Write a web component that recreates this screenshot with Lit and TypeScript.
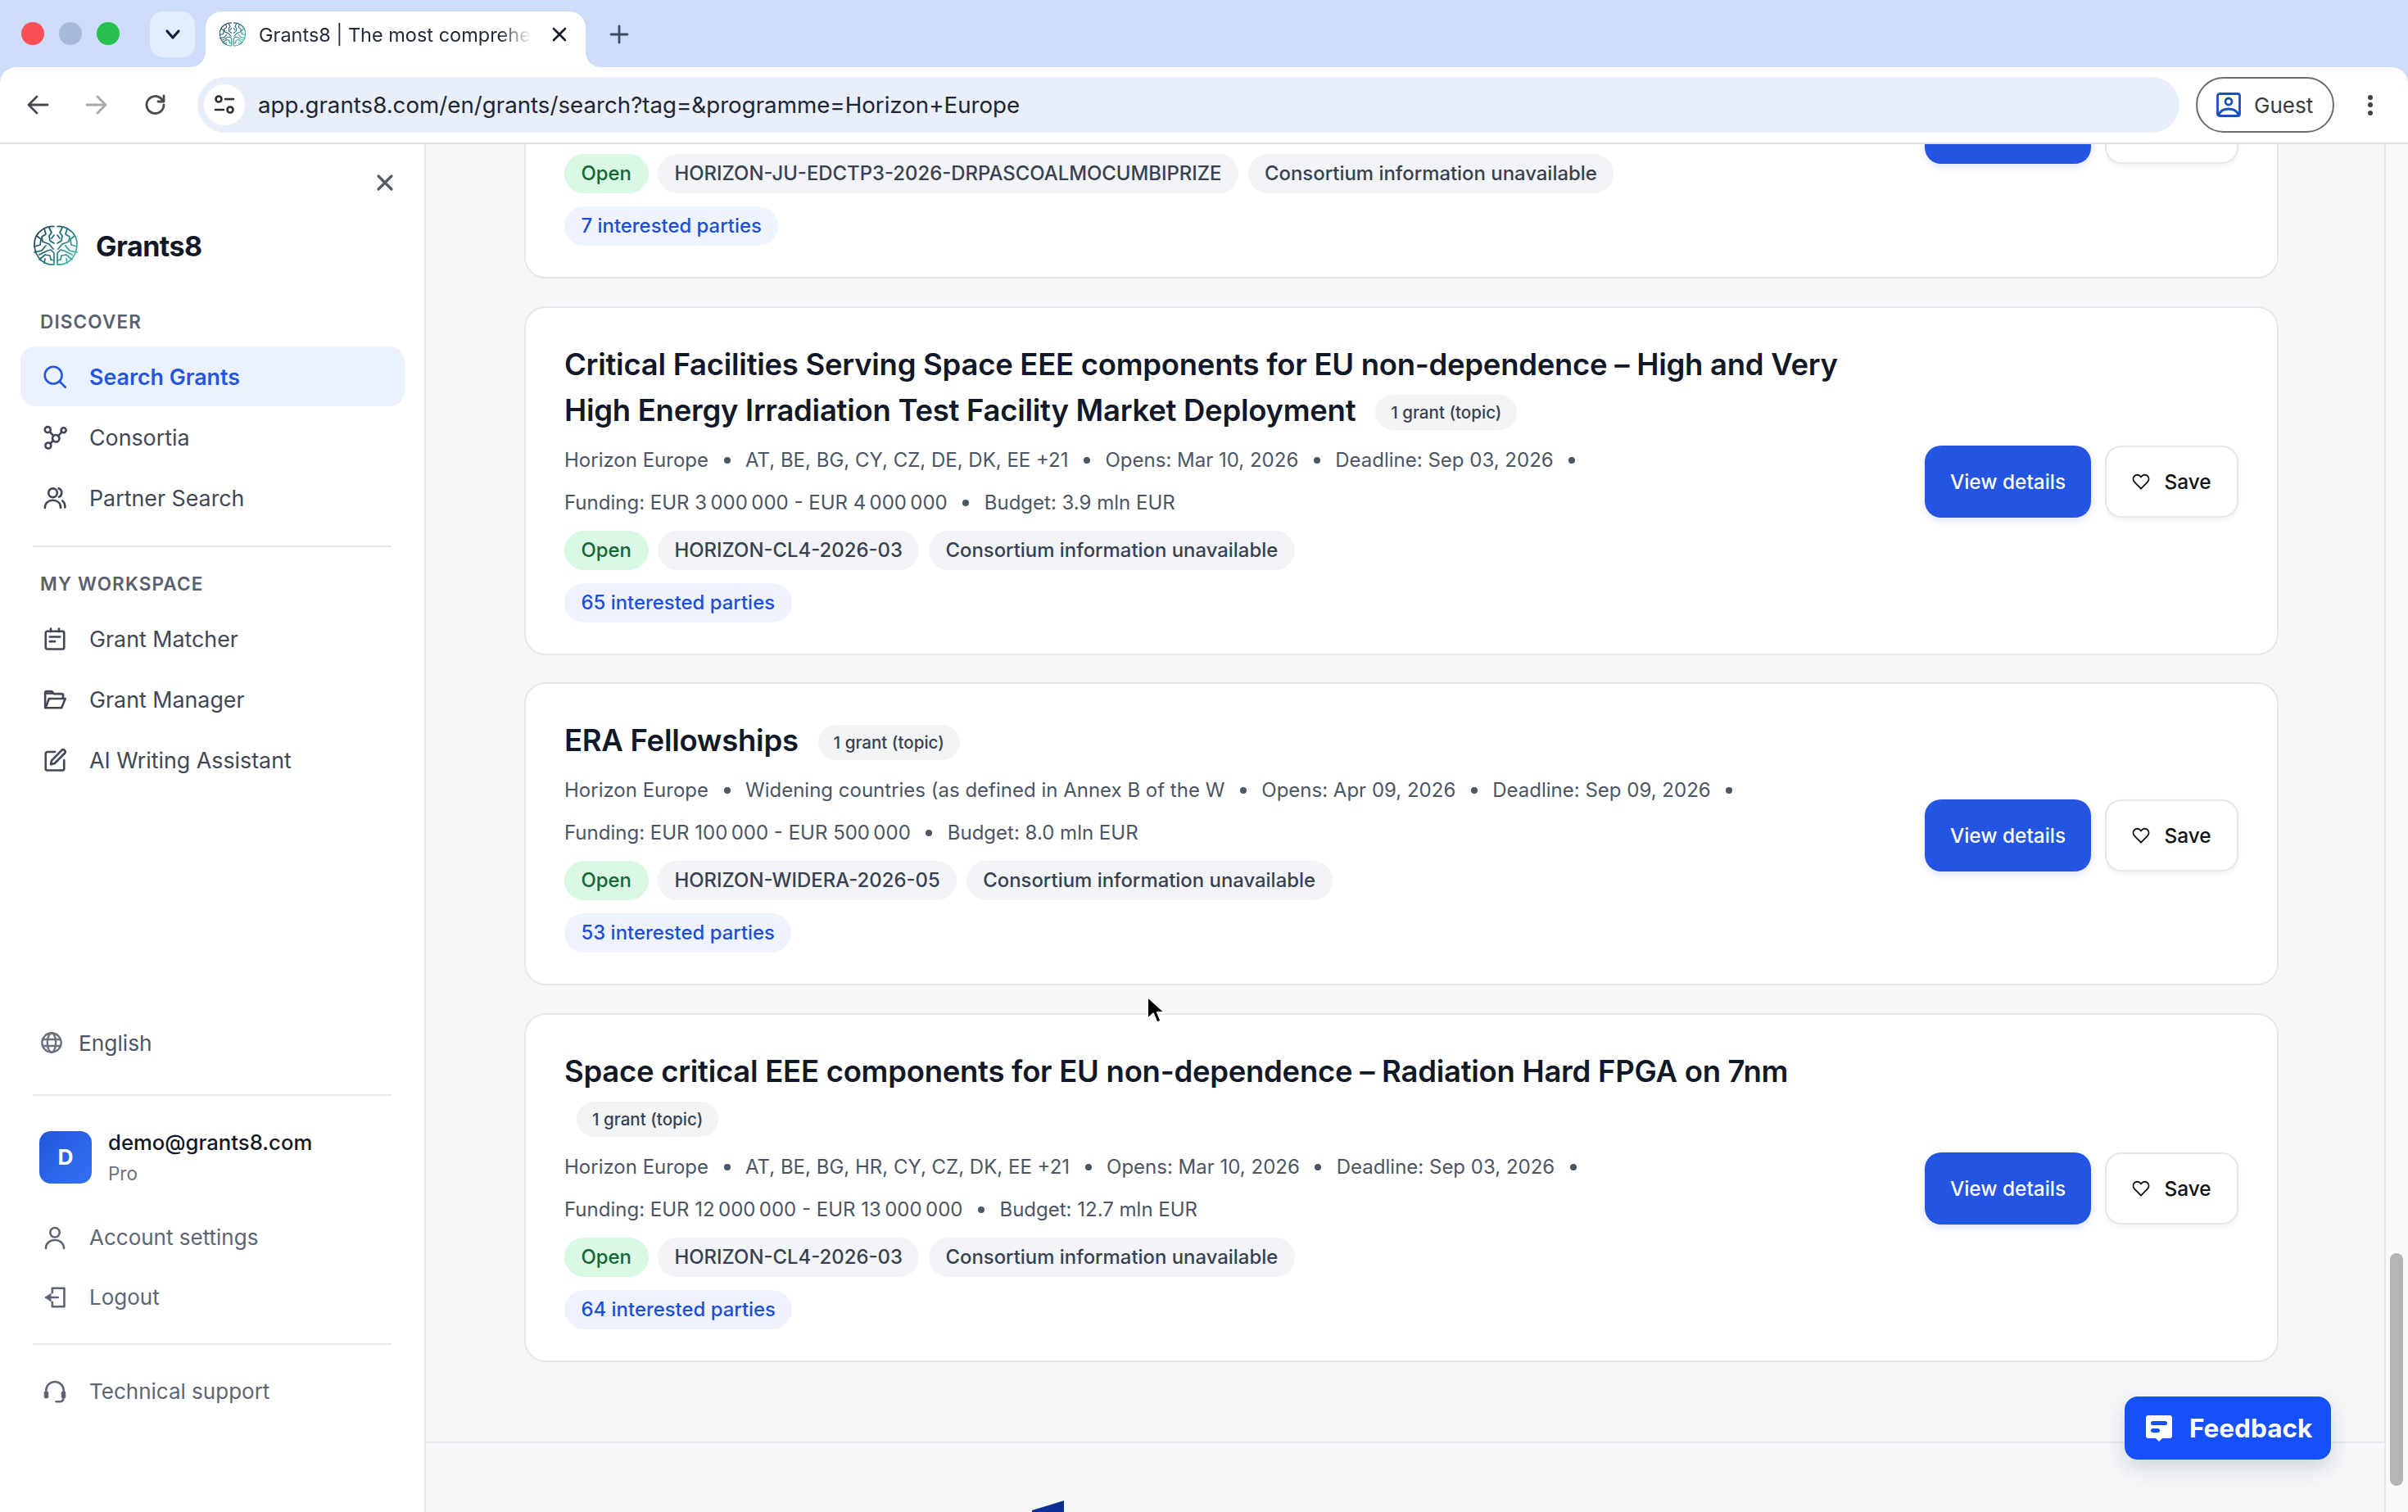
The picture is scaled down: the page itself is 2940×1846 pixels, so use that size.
import { LitElement, css, html, svg } from "lit";
import { customElement } from "lit/decorators.js";

const nn = "\u202f";

type Card = {
	title?: string;
	meta?: string[][];
	topic?: string;
	interested: string;
};

const cards: Card[] = [
	{ topic: "HORIZON-JU-EDCTP3-2026-DRPASCOALMOCUMBIPRIZE", interested: "7 interested parties" },
	{
		title: "Critical Facilities Serving Space EEE components for EU non-dependence – High and Very High Energy Irradiation Test Facility Market Deployment",
		meta: [
			["Horizon Europe", "AT, BE, BG, CY, CZ, DE, DK, EE +21", "Opens: Mar 10, 2026", "Deadline: Sep 03, 2026", `Funding: EUR 3${nn}000${nn}000 - EUR 4${nn}000${nn}000`, "Budget: 3.9 mln EUR"],
		],
		topic: "HORIZON-CL4-2026-03",
		interested: "65 interested parties",
	},
	{
		title: "ERA Fellowships",
		meta: [
			["Horizon Europe", "Widening countries (as defined in Annex B of the W", "Opens: Apr 09, 2026", "Deadline: Sep 09, 2026", `Funding: EUR 100${nn}000 - EUR 500${nn}000`, "Budget: 8.0 mln EUR"],
		],
		topic: "HORIZON-WIDERA-2026-05",
		interested: "53 interested parties",
	},
	{
		title: "Space critical EEE components for EU non-dependence – Radiation Hard FPGA on 7nm",
		meta: [
			["Horizon Europe", "AT, BE, BG, HR, CY, CZ, DK, EE +21", "Opens: Mar 10, 2026", "Deadline: Sep 03, 2026", `Funding: EUR 12${nn}000${nn}000 - EUR 13${nn}000${nn}000`, "Budget: 12.7 mln EUR"],
		],
		topic: "HORIZON-CL4-2026-03",
		interested: "64 interested parties",
	},
];

const icons: Record<string, unknown> = {
	search: svg`<circle cx="10.5" cy="10.5" r="8.3"/><path d="m16.6 16.6 5.6 5.6"/>`,
	consortia: svg`<circle cx="5" cy="4.5" r="2.8"/><circle cx="20.5" cy="5" r="2.4"/><circle cx="5.5" cy="20" r="2.8"/><circle cx="13" cy="13" r="3.4"/><path d="m7 6.5 3.8 4M18.6 6.8l-3.400 4M7.500 18l3-3"/>`,
	people: svg`<circle cx="10" cy="7" r="4.300"/><path d="M2.300 21.500c0-4.700 3.400-7.300 7.700-7.300s7.700 2.600 7.700 7.300"/><path d="M15.600 2.600c2 .7 3 2.400 3 4.300s-.9 3.300-2.600 4M19.400 14.800c1.700 1.200 2.500 3.600 2.500 6.400"/>`,
	calendar: svg`<rect x="3" y="4.600" width="18" height="17.400" rx="1.600"/><path d="M8 2v3M16 2v3M7 10h10M7 14.500h5"/>`,
	folder: svg`<path d="M2.500 20V5.500A1.500 1.500 0 0 1 4 4h5l2 2.500h7.500A1.500 1.500 0 0 1 20 8v3"/><path d="M2.800 20.200h15.700l3.700-9H6.300z"/><path class="fill" d="M3 5h6l1.500 2H3z"/>`,
	edit: svg`<path d="M12 4H4.600A1.600 1.600 0 0 0 3 5.600v14.800A1.600 1.600 0 0 0 4.600 22h14.800a1.600 1.600 0 0 0 1.600-1.600V12"/><path d="M18.600 2.500a2 2 0 0 1 2.900 2.900l-9.700 9.800-3.900 1 1-3.900z"/>`,
	globe: svg`<circle cx="12" cy="12" r="10"/><ellipse cx="12" cy="12" rx="4.400" ry="10"/><path d="M3 8.600h18M3 15.400h18"/>`,
	user: svg`<circle cx="12" cy="7" r="4.600"/><path d="M3.200 22.400c0-5 3.800-8 8.800-8s8.800 3 8.800 8"/>`,
	logout: svg`<path d="M9.500 7.400V3h11.700v18H9.500v-4.400"/><path d="M15 12H3.400"/><path class="fill" d="M8.400 7.500v9L2 12z"/>`,
	headset: svg`<path d="M3.400 15v-4a8.600 8.600 0 0 1 17.200 0v4"/><rect class="fill" x="1.400" y="11.600" width="4.400" height="7" rx="1.600"/><rect class="fill" x="18.200" y="11.600" width="4.400" height="7" rx="1.600"/><path d="M20.400 18c0 2.600-1.600 3.800-3.600 3.800h-3.600"/>`,
};

const icon = (name: string) => html`<svg class="ico" viewBox="0 0 24 24">${icons[name]}</svg>`;

const brain = (cls: string) => html`
	<svg class=${cls} viewBox="0 0 56 50" fill="none" stroke="url(#brainGrad)" stroke-width="1.700" stroke-linecap="round" stroke-linejoin="round">
		<defs>
			<linearGradient id="brainGrad" gradientUnits="userSpaceOnUse" x1="2" y1="6" x2="54" y2="44">
				<stop offset="0" stop-color="#1b3f55" />
				<stop offset="0.5" stop-color="#1f6f7a" />
				<stop offset="1" stop-color="#41c9b4" />
			</linearGradient>
		</defs>
		<path d="M26 1.500C15 1 5 8 2.500 18 .5 29 5 41 15 46c4 2 8 2.500 11 2V34l-4-4-4 1-10 5" />
		<path d="M26 22l-5-3-1-6 3-4-3-6M14 4l2 7-5 3 1 6 8 3 5 6M5 13l5 4-1 7-7 2M2 33l9-2 5-6M26 12l-3 4" />
		<path d="M8 42l7-6 6 1 1 5 4 1M14 46l1-5" />
		<path d="M30 1.500C41 1 51 8 53.500 18 55.500 29 51 41 41 46c-4 2-8 2.500-11 2V34l4-4 4 1 10 5" />
		<path d="M30 22l5-3 1-6-3-4 3-6M42 4l-2 7 5 3-1 6-8 3-5 6M51 13l-5 4 1 7 7 2M54 33l-9-2-5-6M30 12l3 4" />
		<path d="M48 42l-7-6-6 1-1 5-4 1M42 46l-1-5" />
	</svg>
`;

@customElement("app-root")
export class AppRoot extends LitElement {
	static styles = css`
		:host {
			display: block;
			position: relative;
			width: 2940px;
			height: 1846px;
			overflow: hidden;
			font-family: Inter, "Liberation Sans", sans-serif;
			color: #111827;
			background: #cddcf9;
		}
		* {
			box-sizing: border-box;
		}
		.ico {
			width: 30px;
			height: 30px;
			flex: none;
			fill: none;
			stroke: currentColor;
			stroke-width: 2.100;
			stroke-linecap: round;
			stroke-linejoin: round;
		}
		.ico .fill {
			fill: currentColor;
			stroke: none;
		}

		/* browser chrome */
		.tabstrip {
			display: flex;
			align-items: flex-end;
			height: 82px;
			padding-left: 26px;
		}
		.lights {
			display: flex;
			gap: 18px;
			align-self: center;
			margin-right: 37px;
		}
		.light {
			width: 28px;
			height: 28px;
			border-radius: 50%;
		}
		.tab-search {
			display: flex;
			align-items: center;
			justify-content: center;
			width: 55px;
			height: 56px;
			margin: 0 13px 12px 0;
			border-radius: 16px;
			background: #e2ecfc;
			color: #0f2240;
		}
		.tab {
			position: relative;
			display: flex;
			align-items: center;
			width: 464px;
			height: 68px;
			padding: 0 22px 12px 16px;
			border-radius: 20px 20px 0 0;
			background: #fff;
		}
		.tab::before,
		.tab::after {
			content: "";
			position: absolute;
			bottom: 0;
			width: 18px;
			height: 18px;
		}
		.tab::before {
			left: -18px;
			background: radial-gradient(circle at 0 0, transparent 17.500px, #fff 18px);
		}
		.tab::after {
			right: -18px;
			background: radial-gradient(circle at 100% 0, transparent 17.500px, #fff 18px);
		}
		.favicon {
			width: 34px;
			height: 30px;
			flex: none;
		}
		.tab-title {
			flex: 1;
			margin-left: 15px;
			overflow: hidden;
			white-space: nowrap;
			font-size: 23.500px;
			color: #1f2937;
			-webkit-mask-image: linear-gradient(90deg, #000 88%, transparent 100%);
			mask-image: linear-gradient(90deg, #000 88%, transparent 100%);
		}
		.tab-close {
			width: 20px;
			height: 20px;
			margin-left: 24px;
			flex: none;
			color: #111827;
		}
		.new-tab {
			width: 24px;
			height: 24px;
			margin: 0 0 28px 29px;
			color: #3c4a60;
		}
		.toolbar {
			position: relative;
			display: flex;
			align-items: center;
			height: 94px;
			padding: 0 0 0 31px;
			border-radius: 20px 20px 0 0;
			border-bottom: 2px solid #dcdde0;
			background: #fff;
		}
		.nav-btn {
			width: 30px;
			height: 30px;
			margin-right: 42px;
			color: #474a50;
		}
		.nav-btn.off {
			color: #a6a8ac;
		}
		.omnibox {
			display: flex;
			align-items: center;
			flex: 1;
			height: 68px;
			margin-left: -6px;
			padding-left: 8px;
			border-radius: 34px;
			background: #e8eefa;
		}
		.site-info {
			display: flex;
			align-items: center;
			justify-content: center;
			width: 50px;
			height: 50px;
			border-radius: 50%;
			background: #fff;
			color: #2a2e35;
		}
		.url {
			margin-left: 16px;
			font-size: 27.700px;
			color: #202631;
		}
		.guest {
			display: flex;
			align-items: center;
			gap: 16px;
			width: 169px;
			height: 68px;
			margin-left: 20px;
			padding-left: 23px;
			border: 2px solid #6c6c6c;
			border-radius: 34px;
			font-size: 26px;
			color: #3a3a3a;
		}
		.guest svg {
			width: 30px;
			height: 30px;
			flex: none;
		}
		.kebab {
			display: flex;
			flex-direction: column;
			gap: 3.500px;
			margin: 0 43px 0 41px;
		}
		.kebab i {
			width: 6px;
			height: 6px;
			border-radius: 50%;
			background: #444;
		}

		/* page */
		.page {
			display: flex;
			height: 1670px;
			background: #f6f7f9;
		}
		.sidebar {
			display: flex;
			flex-direction: column;
			flex: none;
			width: 520px;
			height: 100%;
			padding-bottom: 111px;
			border-right: 2px solid #e5e7eb;
			background: #fff;
		}
		.close {
			width: 24px;
			height: 24px;
			margin: 35px 0 0 458px;
			flex: none;
			color: #555b66;
		}
		.brand {
			display: flex;
			align-items: center;
			gap: 21px;
			height: 50px;
			margin: 40px 0 0 40px;
			font-size: 34px;
			font-weight: 700;
			letter-spacing: -0.500px;
			color: #111827;
		}
		.brand-mark {
			width: 56px;
			height: 50px;
		}
		.label {
			height: 30px;
			margin-left: 49px;
			font-size: 22.500px;
			line-height: 30px;
			font-weight: 600;
			letter-spacing: 1.150px;
			color: #596070;
		}
		.label.first {
			margin-top: 53px;
		}
		.label.second {
			margin-top: 30px;
		}
		.nav {
			display: flex;
			flex-direction: column;
			gap: 1px;
			margin: 15px 24px 0 25px;
		}
		.item {
			display: flex;
			align-items: center;
			gap: 27px;
			height: 73px;
			padding-left: 27px;
			border-radius: 18px;
			font-size: 26.800px;
			color: #414755;
		}
		.item.active {
			background: #ebf2fe;
			color: #2456e0;
			font-weight: 600;
		}
		.item.muted {
			font-size: 26px;
			color: #5e6575;
		}
		.rule {
			height: 2px;
			margin: 22px 40px 0 40px;
			flex: none;
			background: #e5e7eb;
		}
		.bottom {
			display: flex;
			flex-direction: column;
			margin-top: auto;
		}
		.lang {
			display: flex;
			align-items: center;
			gap: 19px;
			height: 50px;
			margin-left: 49px;
			font-size: 26.300px;
			color: #4b5563;
		}
		.lang .ico {
			width: 28px;
			height: 28px;
			color: #6b7280;
		}
		.profile {
			display: flex;
			align-items: center;
			gap: 20px;
			margin: 40px 0 0 48px;
		}
		.avatar {
			display: flex;
			align-items: center;
			justify-content: center;
			width: 64px;
			height: 64px;
			border-radius: 14px;
			background: linear-gradient(135deg, #2256dd, #3272f2);
			color: #fff;
			font-size: 26.300px;
			font-weight: 700;
		}
		.who {
			font-size: 25.700px;
			font-weight: 500;
			line-height: 34px;
			color: #111827;
		}
		.who small {
			display: block;
			margin-top: 7px;
			font-size: 22.500px;
			font-weight: 400;
			line-height: 28px;
			color: #6b7280;
		}
		.content {
			position: relative;
			flex: 1;
			height: 100%;
			overflow: hidden;
		}
		.list {
			display: flex;
			flex-direction: column;
			gap: 33.500px;
			margin: -207px 129px 0 120px;
		}
		.card {
			display: flex;
			align-items: center;
			padding: 41px 47px 38px 47px;
			border: 2px solid #e5e7eb;
			border-radius: 26px;
			background: #fff;
		}
		.card.clipped {
			min-height: 371px;
		}
		.card.clipped .body {
			align-self: flex-end;
		}
		.body {
			flex: 1;
			min-width: 0;
			margin-right: 40px;
		}
		.title {
			margin: 0;
			font-size: 36.500px;
			font-weight: 600;
			line-height: 56px;
			letter-spacing: -0.270px;
			color: #111827;
		}
		.topic-count {
			display: inline-block;
			height: 43px;
			margin-left: 15px;
			padding: 0 19px;
			border-radius: 22px;
			background: #f3f4f6;
			font-size: 20.600px;
			font-weight: 500;
			line-height: 43px;
			letter-spacing: 0;
			vertical-align: 3px;
			color: #374151;
		}
		.meta {
			display: flex;
			flex-wrap: wrap;
			align-items: center;
			column-gap: 18.500px;
			margin-top: 7px;
			font-size: 24px;
			line-height: 52px;
			color: #4b5563;
		}
		.dot {
			width: 8px;
			height: 8px;
			border-radius: 50%;
			background: #4b5563;
		}
		.chips {
			display: flex;
			gap: 11.500px;
			margin-top: 16px;
		}
		.meta + .chips {
			margin-top: 8px;
		}
		.chip {
			height: 48px;
			padding: 0 20.500px;
			border-radius: 24px;
			background: #f2f4f8;
			font-size: 23.900px;
			font-weight: 500;
			line-height: 48px;
			white-space: nowrap;
			color: #374151;
		}
		.chip.open {
			background: #d9f9e4;
			color: #166534;
		}
		.chip.blue {
			background: #eef3fe;
			color: #1d4ed8;
		}
		.actions {
			display: flex;
			align-items: center;
			flex: none;
			gap: 17px;
		}
		.btn {
			display: flex;
			align-items: center;
			justify-content: center;
			height: 88px;
			border-radius: 20px;
			font-size: 24.400px;
			font-weight: 500;
		}
		.btn.primary {
			width: 203px;
			background: #2354e2;
			color: #fff;
			box-shadow: 0 4px 8px rgba(35, 84, 226, 0.14);
		}
		.btn.ghost {
			gap: 17px;
			width: 163px;
			border: 2px solid #e5e7eb;
			background: #fff;
			color: #111;
			box-shadow: 0 3px 6px rgba(0, 0, 0, 0.05);
		}
		.heart {
			width: 22px;
			height: 22px;
			fill: none;
			stroke: #111;
			stroke-width: 2;
			stroke-linejoin: round;
		}
		.footer {
			margin-top: 97px;
			padding: 70px 0 0 740px;
			border-top: 2px solid #e5e7eb;
		}
		.footer svg {
			display: block;
			width: 40px;
			height: 40px;
		}
		.scrollbar {
			position: relative;
			flex: none;
			width: 29px;
			height: 100%;
			border-left: 2px solid #e5e7eb;
			background: #fafafa;
		}
		.thumb {
			position: absolute;
			top: 1354px;
			left: 5px;
			width: 16px;
			height: 284px;
			border-radius: 8px;
			background: #b5b5b5;
		}
		.feedback {
			position: absolute;
			left: 2594px;
			top: 1705px;
			display: flex;
			align-items: center;
			gap: 21px;
			width: 252px;
			height: 77px;
			padding-left: 26px;
			border-radius: 16px;
			background: #1650fa;
			box-shadow: 0 10px 24px rgba(30, 50, 80, 0.18);
			font-size: 31.500px;
			font-weight: 700;
			color: #fff;
		}
		.feedback svg {
			width: 32px;
			height: 32px;
			flex: none;
		}
		.cursor {
			position: absolute;
			left: 1398px;
			top: 1215px;
			width: 24px;
			height: 38px;
		}
	`;

	private renderMeta(items: string[]) {
		return html`<div class="meta">
			${items.map((text, i) => html`<span>${text}</span>${i < items.length - 1 ? html`<span class="dot"></span>` : ""}`)}
		</div>`;
	}

	private renderCard(card: Card) {
		return html`
			<article class="card ${card.title ? "" : "clipped"}">
				<div class="body">
					${card.title ? html`<h2 class="title">${card.title} <span class="topic-count">1 grant (topic)</span></h2>` : ""}
					${card.meta ? card.meta.map((m) => this.renderMeta(m)) : ""}
					<div class="chips">
						<span class="chip open">Open</span>
						<span class="chip">${card.topic}</span>
						<span class="chip">Consortium information unavailable</span>
					</div>
					<div class="chips"><span class="chip blue">${card.interested}</span></div>
				</div>
				<div class="actions">
					<div class="btn primary">${card.title ? "View details" : ""}</div>
					<div class="btn ghost">
						${card.title
							? html`<svg class="heart" viewBox="0 0 24 24"><path d="M12 21.500 3.200 12.300a5.600 5.600 0 0 1 0-7.700 5.200 5.200 0 0 1 7.500 0L12 6l1.300-1.400a5.200 5.200 0 0 1 7.500 0 5.600 5.600 0 0 1 0 7.700z" /></svg>
									Save`
							: ""}
					</div>
				</div>
			</article>
		`;
	}

	private renderChrome() {
		return html`
			<div class="tabstrip">
				<div class="lights">
					<div class="light" style="background:#fb4f56"></div>
					<div class="light" style="background:#a8b8d8"></div>
					<div class="light" style="background:#27c04f"></div>
				</div>
				<div class="tab-search">
					<svg width="22" height="22" viewBox="0 0 22 22" fill="none" stroke="currentColor" stroke-width="3.200" stroke-linecap="round" stroke-linejoin="round"><path d="m4 7 7 8 7-8" /></svg>
				</div>
				<div class="tab">
					${brain("favicon")}
					<span class="tab-title">Grants8 | The most comprehensive grants</span>
					<svg class="tab-close" viewBox="0 0 20 20" fill="none" stroke="currentColor" stroke-width="2.600" stroke-linecap="round"><path d="m3 3 14 14M17 3 3 17" /></svg>
				</div>
				<svg class="new-tab" viewBox="0 0 24 24" fill="none" stroke="currentColor" stroke-width="2.800" stroke-linecap="round"><path d="M12 2v20M2 12h20" /></svg>
			</div>
			<div class="toolbar">
				<svg class="nav-btn" viewBox="0 0 30 30" fill="none" stroke="currentColor" stroke-width="2.800" stroke-linecap="round" stroke-linejoin="round"><path d="M27 15H4M14 5 4 15l10 10" /></svg>
				<svg class="nav-btn off" viewBox="0 0 30 30" fill="none" stroke="currentColor" stroke-width="2.800" stroke-linecap="round" stroke-linejoin="round"><path d="M3 15h23M16 5l10 10-10 10" /></svg>
				<svg class="nav-btn" viewBox="0 0 30 30" fill="none" stroke="currentColor" stroke-width="2.800" stroke-linecap="round" stroke-linejoin="round"><path d="M25 15a10.500 10.500 0 1 1-3-7.400L25 11V4M25 11h-7" /></svg>
				<div class="omnibox">
					<div class="site-info">
						<svg width="28" height="28" viewBox="0 0 28 28" fill="none" stroke="currentColor" stroke-width="2.600" stroke-linecap="round"><circle cx="7" cy="7" r="3.500" /><path d="M15 7h10M3 20h10" /><circle cx="21" cy="20" r="3.500" /></svg>
					</div>
					<span class="url">app.grants8.com/en/grants/search?tag=&programme=Horizon+Europe</span>
				</div>
				<div class="guest">
					<svg viewBox="0 0 30 30" fill="none" stroke="#1a4fc0" stroke-width="2.800"><rect x="1.500" y="1.500" width="27" height="27" rx="2.500" /><circle cx="15" cy="11" r="4" /><path d="M3 27c2-5 7-7 12-7s10 2 12 7" /></svg>
					Guest
				</div>
				<div class="kebab"><i></i><i></i><i></i></div>
			</div>
		`;
	}

	private renderSidebar() {
		return html`
			<aside class="sidebar">
				<svg class="close" viewBox="0 0 24 24" fill="none" stroke="currentColor" stroke-width="3.200" stroke-linecap="round"><path d="m4 4 16 16M20 4 4 20" /></svg>
				<div class="brand">${brain("brand-mark")}Grants8</div>
				<div class="label first">DISCOVER</div>
				<nav class="nav">
					<div class="item active">${icon("search")}Search Grants</div>
					<div class="item">${icon("consortia")}Consortia</div>
					<div class="item">${icon("people")}Partner Search</div>
				</nav>
				<div class="rule"></div>
				<div class="label second">MY WORKSPACE</div>
				<nav class="nav">
					<div class="item">${icon("calendar")}Grant Matcher</div>
					<div class="item">${icon("folder")}Grant Manager</div>
					<div class="item">${icon("edit")}AI Writing Assistant</div>
				</nav>
				<div class="bottom">
					<div class="lang">${icon("globe")}English</div>
					<div class="rule" style="margin-top:38px"></div>
					<div class="profile">
						<div class="avatar">D</div>
						<div class="who">demo@grants8.com<small>Pro</small></div>
					</div>
					<nav class="nav" style="margin-top:27px;gap:0">
						<div class="item muted">${icon("user")}Account settings</div>
						<div class="item muted">${icon("logout")}Logout</div>
					</nav>
					<div class="rule" style="margin-top:20px"></div>
					<nav class="nav" style="margin-top:20px">
						<div class="item muted">${icon("headset")}Technical support</div>
					</nav>
				</div>
			</aside>
		`;
	}

	render() {
		return html`
			${this.renderChrome()}
			<div class="page">
				${this.renderSidebar()}
				<main class="content">
					<div class="list">${cards.map((c) => this.renderCard(c))}</div>
					<footer class="footer">
						<svg viewBox="0 0 40 40"><path d="M0 12 39 0v40H0z" fill="#0c2f94" /></svg>
					</footer>
				</main>
				<div class="scrollbar"><div class="thumb"></div></div>
			</div>
			<div class="feedback">
				<svg viewBox="0 0 32 32"><path fill="#fff" d="M3 0h26a3 3 0 0 1 3 3v22a3 3 0 0 1-3 3h-9l-4 4-4-4H3a3 3 0 0 1-3-3V3a3 3 0 0 1 3-3z" /><rect x="6" y="7" width="20" height="5" rx="2.500" fill="#1650fa" /><rect x="6" y="16" width="11" height="5" rx="2.500" fill="#1650fa" /></svg>
				Feedback
			</div>
			<svg class="cursor" viewBox="0 0 24 38"><path d="M3 2v27l7-6.500 4.500 11 5-2-4.500-10.500h9z" fill="#000" stroke="#fff" stroke-width="2" stroke-linejoin="round" /></svg>
		`;
	}
}
